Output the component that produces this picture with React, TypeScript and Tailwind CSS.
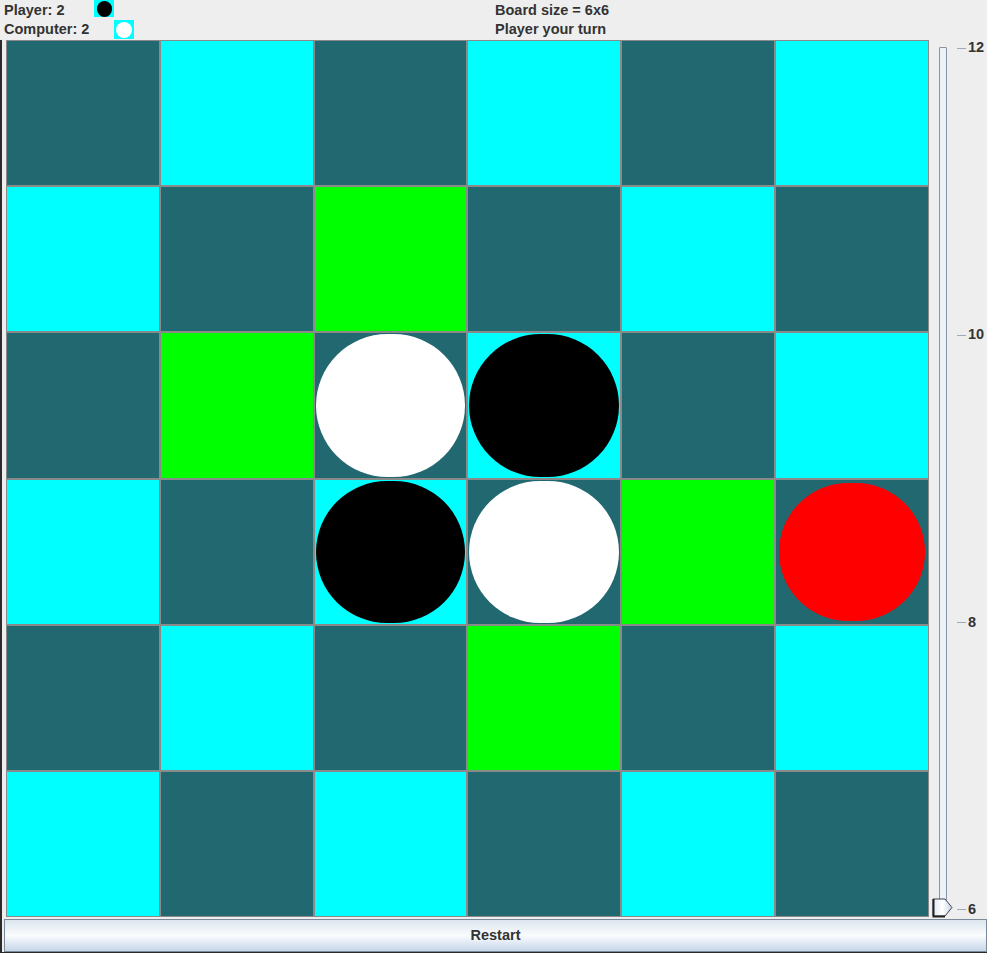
import React from "react";

type Cell = { bg: string; piece?: string };

const DARK = "bg-[#216870]";
const CYAN = "bg-[#00ffff]";
const GREEN = "bg-[#00ff00]";

// board state, row by row
const board: Cell[][] = [
    [{ bg: DARK }, { bg: CYAN }, { bg: DARK }, { bg: CYAN }, { bg: DARK }, { bg: CYAN }],
    [{ bg: CYAN }, { bg: DARK }, { bg: GREEN }, { bg: DARK }, { bg: CYAN }, { bg: DARK }],
    [
        { bg: DARK },
        { bg: GREEN },
        { bg: DARK, piece: "bg-white m-[1px]" },
        { bg: CYAN, piece: "bg-black m-[1px]" },
        { bg: DARK },
        { bg: CYAN },
    ],
    [
        { bg: CYAN },
        { bg: DARK },
        { bg: CYAN, piece: "bg-black m-[1px]" },
        { bg: DARK, piece: "bg-white m-[1px]" },
        { bg: GREEN },
        { bg: DARK, piece: "bg-[#ff0000] m-[3px]" },
    ],
    [{ bg: DARK }, { bg: CYAN }, { bg: DARK }, { bg: GREEN }, { bg: DARK }, { bg: CYAN }],
    [{ bg: CYAN }, { bg: DARK }, { bg: CYAN }, { bg: DARK }, { bg: CYAN }, { bg: DARK }],
];

const ticks = ["12", "10", "8", "6"];

const App = () => {
    return (
        <div
            className="w-[987px] h-[953px] bg-[#eeeeee] flex flex-col text-[#333333] overflow-hidden"
            style={{ fontFamily: '"Liberation Sans", Arial, sans-serif' }}
        >
            {/* header */}
            <div className="h-[40px] flex flex-row text-[14.5px] font-bold leading-[19px]">
                <div className="w-[495px] pl-[4px] pt-[1px] flex flex-col">
                    <div className="flex flex-row h-[19px]">
                        <p className="w-[90px]">Player: 2</p>
                        <div className="-mt-[1px] w-[20px] h-[17px] bg-[#00ffff] flex items-center justify-center">
                            <div className="w-[15px] h-[16px] rounded-full bg-black" />
                        </div>
                    </div>
                    <div className="flex flex-row h-[19px]">
                        <p className="w-[110px]">Computer: 2</p>
                        <div className="w-[20px] h-[19px] bg-[#00ffff] flex items-center justify-center">
                            <div className="w-[16px] h-[16px] rounded-full bg-white" />
                        </div>
                    </div>
                </div>
                <div className="pt-[1px] flex flex-col">
                    <p className="h-[19px]">Board size = 6x6</p>
                    <p className="h-[19px]">Player your turn</p>
                </div>
            </div>

            <div className="flex flex-row flex-1">
                {/* window edge */}
                <div className="w-[2px] bg-[#2b2b2b]" />
                <div className="flex flex-col flex-1">
                    <div className="flex flex-row h-[879px]">
                        {/* board */}
                        <div className="ml-[4px] w-[923px] h-[877px] bg-[#8a8a8a] p-[1px] grid grid-cols-6 grid-rows-6 gap-[2px]">
                            {board.flat().map((cell, i) => (
                                <div key={i} className={`${cell.bg} flex`}>
                                    {cell.piece && (
                                        <div className={`flex-1 rounded-full ${cell.piece}`} />
                                    )}
                                </div>
                            ))}
                        </div>

                        {/* slider */}
                        <div className="relative flex flex-row flex-1">
                            <div className="ml-[10px] mt-[7px] w-[8px] h-[858px] border border-[#8596a8] bg-[#eef2f6] rounded-[1px]" />
                            <div className="absolute left-[3px] top-[858px]">
                                <svg width="22" height="20" viewBox="0 0 22 20">
                                    <defs>
                                        <linearGradient id="thumb" x1="0" y1="0" x2="1" y2="0">
                                            <stop offset="0" stopColor="#dfe8f2" />
                                            <stop offset="0.5" stopColor="#ffffff" />
                                            <stop offset="1" stopColor="#c6d4e4" />
                                        </linearGradient>
                                    </defs>
                                    <path
                                        d="M1 1 H13 L20 9.5 L13 18 H1 Z"
                                        fill="url(#thumb)"
                                        stroke="#3a4450"
                                        strokeWidth="1"
                                    />
                                    <path d="M1.5 1 V18.5 H13" fill="none" stroke="#222" strokeWidth="2" />
                                </svg>
                            </div>
                            <div className="ml-[10px] flex flex-col justify-between h-[878px] text-[14.5px] font-bold">
                                {ticks.map((t) => (
                                    <div key={t} className="flex flex-row items-center h-[16px] gap-[2px]">
                                        <div className="w-[9px] h-[1px] bg-[#9aaabb]" />
                                        <span>{t}</span>
                                    </div>
                                ))}
                            </div>
                        </div>
                    </div>

                    {/* restart button */}
                    <button className="ml-[2px] h-[33px] border border-[#7a8a99] bg-gradient-to-b from-[#dde5ee] via-[#fafcfe] to-[#c6d6e8] text-[14.5px] font-bold text-[#333333]">
                        Restart
                    </button>
                    <div className="flex-1 bg-[#2b2b2b]" />
                </div>
            </div>
        </div>
    );
};

export default App;
